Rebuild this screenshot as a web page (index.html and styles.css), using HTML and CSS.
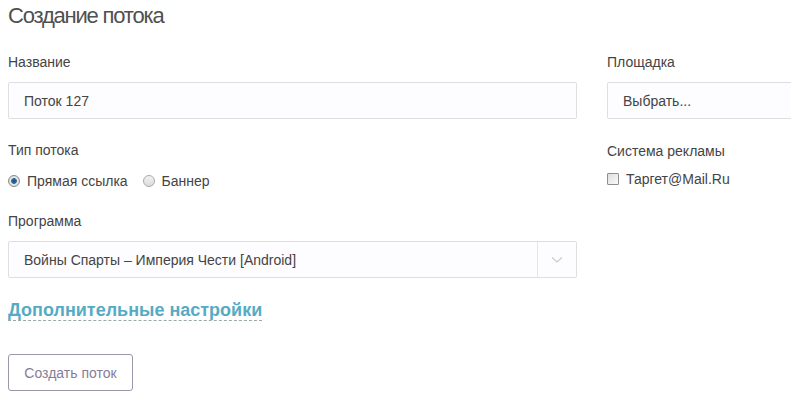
FILE: index.html
```html
<!DOCTYPE html>
<html>
<head>
  <title>Создание потока</title>
  <link rel="stylesheet" href="styles.css">
</head>
<body>
  <h1 class="title">Создание потока</h1>
  <form class="stream-form">
    <div class="grid">
      <div class="col">
        <label class="field-label" for="name">Название</label>
        <input class="field" type="text" id="name" value="Поток 127">

        <div class="field-label gap">Тип потока</div>
        <div class="options">
          <label class="option"><input type="radio" name="type" checked> Прямая ссылка</label>
          <label class="option"><input type="radio" name="type"> Баннер</label>
        </div>

        <div class="field-label gap">Программа</div>
        <div class="field select">
          <span class="select-text">Войны Спарты – Империя Чести [Android]</span>
          <span class="select-arrow">
            <svg width="12" height="8" viewBox="0 0 12 8"><path d="M1 1.5 L6 6 L11 1.5" fill="none" stroke="#ccc" stroke-width="1.3"/></svg>
          </span>
        </div>
      </div>

      <div class="col">
        <div class="field-label">Площадка</div>
        <div class="field select">
          <span class="select-text">Выбрать...</span>
        </div>

        <div class="field-label gap">Система рекламы</div>
        <div class="options">
          <label class="option"><input type="checkbox"> Таргет@Mail.Ru</label>
        </div>
      </div>
    </div>

    <div class="more"><a href="#" class="more-link">Дополнительные настройки</a></div>

    <button type="submit" class="btn">Создать поток</button>
  </form>
</body>
</html>
```

FILE: styles.css
```css
body {
  margin: 0 8px;
  font-family: "Liberation Sans", Arial, sans-serif;
  font-size: 14px;
  color: #444;
  background: #fff;
  overflow: hidden;
}
.title {
  margin: 2px 0 0;
  font-size: 22px;
  letter-spacing: -1.2px;
  line-height: 28px;
  font-weight: normal;
  color: #505050;
}
.stream-form {
  margin-top: 24px;
}
.grid {
  display: grid;
  grid-template-columns: 569px 569px;
  column-gap: 30px;
}
.field-label {
  display: block;
  line-height: 16px;
  margin-bottom: 12px;
  color: #444;
}
.field-label.gap {
  margin-top: 23px;
  margin-bottom: 15px;
}
.col > .field-label.gap:nth-of-type(3) {
  margin-top: 24px;
  margin-bottom: 12px;
}
.field {
  box-sizing: border-box;
  display: flex;
  align-items: center;
  width: 100%;
  height: 37px;
  margin: 0;
  padding: 0 0 0 15px;
  border: 1px solid #e0dee3;
  border-radius: 2px;
  background: #fdfcfe;
  font-family: inherit;
  font-size: 14px;
  color: #444;
  outline: none;
}
.select {
  padding-right: 0;
}
.select-text {
  flex: 1;
}
.select-arrow {
  width: 38px;
  height: 100%;
  border-left: 1px solid #e6e4e8;
  display: flex;
  align-items: center;
  justify-content: center;
}
.options {
  display: flex;
  gap: 15px;
  line-height: 16px;
}
.option {
  display: flex;
  align-items: center;
  gap: 7px;
  color: #444;
}
.option input {
  appearance: none;
  margin: 0;
  width: 12px;
  height: 12px;
  border: 1px solid #a9a9a9;
  box-sizing: border-box;
  background: linear-gradient(#f2f2f2, #dcdcdc);
}
.option input[type="radio"] {
  border-radius: 50%;
}
.option input[type="radio"]:checked {
  background: radial-gradient(circle, #1f4f7e 0, #2c6aa0 2.5px, #e8e8e8 3.2px, #cfcfcf 100%);
  border-color: #8a8a8a;
}
.option input[type="checkbox"] {
  border-radius: 1px;
  border-color: #8e8e8e;
  background: linear-gradient(135deg, #dedede, #fafafa);
}
.more {
  margin-top: 22px;
  line-height: 21px;
}
.more-link {
  font-size: 18px;
  font-weight: bold;
  color: #55abc4;
  text-decoration: none;
  border-bottom: 1px dashed #9aa;
}
.btn {
  display: block;
  margin-top: 32px;
  width: 125px;
  height: 37px;
  padding: 0;
  border: 1px solid #9d96ab;
  border-radius: 3px;
  background: #fff;
  font-family: inherit;
  font-size: 14px;
  color: #857d98;
  cursor: pointer;
}
```
